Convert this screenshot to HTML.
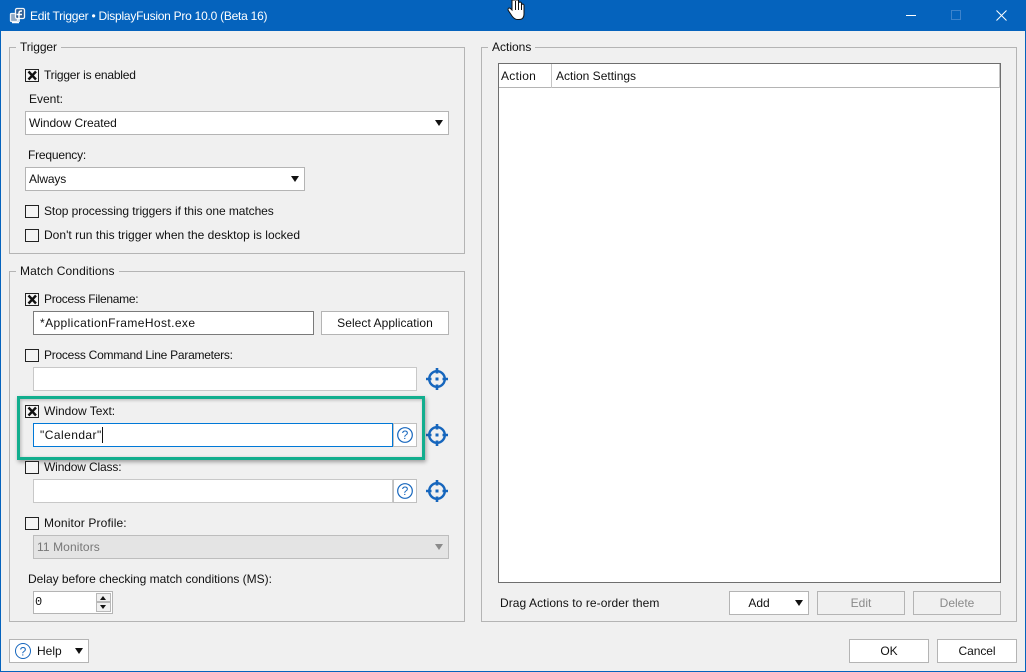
<!DOCTYPE html>
<html><head><meta charset="utf-8"><style>
*{box-sizing:border-box}
html,body{margin:0;padding:0}
body{width:1026px;height:672px;position:relative;overflow:hidden;background:#f0f0f0;font:12px "Liberation Sans",sans-serif;color:#111}
.a{position:absolute}
.t{position:absolute;white-space:nowrap;line-height:16px;height:16px}
.g{position:absolute;border:1px solid #b4b4b4}
.lg{position:absolute;background:#f0f0f0;padding:0 4px;line-height:16px;white-space:nowrap}
.cb{position:absolute;width:14px;height:13px;border:1px solid #222;background:#f4f4f4}
.i{position:absolute;background:#fff;border:1px solid #c8c8c8}
.b{position:absolute;background:#fff;border:1px solid #b4b4b4;text-align:center;line-height:22px;white-space:nowrap}
.d{color:#8a8a8a;background:#f0f0f0}
.s{position:absolute;background:#fff;border:1px solid #b4b4b4;line-height:22px;padding-left:3px;white-space:nowrap}
.ar{position:absolute;width:0;height:0;border-left:4.5px solid transparent;border-right:4.5px solid transparent;border-top:6px solid #111}
</style></head><body>
<div class="a" style="left:0;top:0;width:1026px;height:31px;background:#0563bd"></div>
<div class="a" style="left:0;top:31px;width:1px;height:641px;background:#0563bd"></div>
<div class="a" style="left:1025px;top:31px;width:1px;height:641px;background:#0563bd"></div>
<div class="a" style="left:0;top:671px;width:1026px;height:1px;background:#0563bd"></div>
<svg class="a" style="left:9px;top:7px" width="17" height="17" viewBox="0 0 17 17"><rect x="1.500" y="6.500" width="7" height="8" rx="1" fill="#8fa8c4" stroke="#e8eef4" stroke-width="1.300"/><rect x="6.500" y="1.500" width="9" height="10" rx="1.500" fill="#2f5f96" stroke="#f4f6f8" stroke-width="1.300"/><path d="M10 15V6Q10 3.800 13 4M7.500 7.500H13M3 15.500H10" stroke="#fff" stroke-width="1.500" fill="none"/></svg>
<div class="t" style="left:30px;top:8px;color:#fff;letter-spacing:-.25px">Edit Trigger • DisplayFusion Pro 10.0 (Beta 16)</div>
<div class="a" style="left:906px;top:15px;width:10px;height:1px;background:#fff"></div>
<div class="a" style="left:951px;top:10px;width:10px;height:10px;border:1px solid #3d83cc"></div>
<svg class="a" style="left:996px;top:10px" width="11" height="11"><path d="M.5.500L10.500 10.500M10.500.500L.5 10.500" stroke="#fff" fill="none"/></svg>
<svg class="a" style="left:506px;top:0" width="20" height="21" viewBox="0 0 20 21"><path d="M6 0V10L4.500 8.500Q2 7 2 10L6 16Q8.500 19.500 11.500 19.500H13Q18 19.500 18 14V5Q17 3 15.500 5V3Q14 1 12.500 3V0Z" fill="#fff" stroke="#111"/><path d="M9.500 1V10M12.500 2V10M15.500 4V10" stroke="#111" fill="none"/></svg>

<div class="g" style="left:9px;top:47px;width:456px;height:207px"></div>
<div class="lg" style="left:16px;top:39px;letter-spacing:-.1px">Trigger</div>
<div class="cb" style="left:25px;top:69px"></div>
<svg class="a" style="left:27px;top:70px" width="11" height="11"><path d="M1.500 1.500L9 9.500M9 1.500L1.500 9.500" stroke="#111" stroke-width="2.400" fill="none"/></svg>
<div class="t" style="left:44px;top:67px;letter-spacing:-.22px">Trigger is enabled</div>
<div class="t" style="left:29px;top:91px">Event:</div>
<div class="s" style="left:25px;top:111px;width:424px;height:24px;letter-spacing:-.07px">Window Created</div>
<div class="ar" style="left:435px;top:120px"></div>
<div class="t" style="left:28px;top:147px;letter-spacing:-.2px">Frequency:</div>
<div class="s" style="left:25px;top:167px;width:280px;height:24px;letter-spacing:-.15px">Always</div>
<div class="ar" style="left:291px;top:176px"></div>
<div class="cb" style="left:25px;top:205px"></div>
<div class="t" style="left:44px;top:203px;letter-spacing:-.07px">Stop processing triggers if this one matches</div>
<div class="cb" style="left:25px;top:229px"></div>
<div class="t" style="left:44px;top:227px;letter-spacing:.02px">Don't run this trigger when the desktop is locked</div>

<div class="g" style="left:9px;top:271px;width:456px;height:351px"></div>
<div class="lg" style="left:16px;top:263px;letter-spacing:.12px">Match Conditions</div>
<div class="cb" style="left:25px;top:293px"></div>
<svg class="a" style="left:27px;top:294px" width="11" height="11"><path d="M1.500 1.500L9 9.500M9 1.500L1.500 9.500" stroke="#111" stroke-width="2.400" fill="none"/></svg>
<div class="t" style="left:44px;top:291px;letter-spacing:-.3px">Process Filename:</div>
<div class="i" style="left:33px;top:311px;width:281px;height:24px;border-color:#7a7a7a;padding-left:6px;line-height:22px;letter-spacing:.4px">*ApplicationFrameHost.exe</div>
<div class="b" style="left:321px;top:311px;width:128px;height:24px;letter-spacing:.05px">Select Application</div>
<div class="cb" style="left:25px;top:349px"></div>
<div class="t" style="left:44px;top:347px;letter-spacing:-.25px">Process Command Line Parameters:</div>
<div class="i" style="left:33px;top:367px;width:384px;height:24px"></div>
<svg class="a" style="left:425px;top:367px" width="24" height="24" viewBox="0 0 24 24"><circle cx="12" cy="12" r="7.800" fill="none" stroke="#1666bd" stroke-width="2.400"/><path d="M12 1V6.500M12 17.500V23M1 12H6.500M17.500 12H23" stroke="#1666bd" stroke-width="2.600"/><rect x="10.500" y="10.500" width="3" height="3" fill="#1666bd"/></svg>

<div class="cb" style="left:25px;top:405px"></div>
<svg class="a" style="left:27px;top:406px" width="11" height="11"><path d="M1.500 1.500L9 9.500M9 1.500L1.500 9.500" stroke="#111" stroke-width="2.400" fill="none"/></svg>
<div class="t" style="left:44px;top:403px">Window Text:</div>
<div class="i" style="left:33px;top:423px;width:360px;height:24px;border-color:#0078d7;padding-left:6px;line-height:22px;letter-spacing:.45px">"Calendar"</div>
<div class="a" style="left:102px;top:427px;width:1px;height:16px;background:#111"></div>
<div class="i" style="left:393px;top:423px;width:24px;height:24px;border-color:#c0c0c0"></div>
<svg class="a" style="left:397px;top:427px" width="16" height="16" viewBox="0 0 16 16"><circle cx="8" cy="8" r="7.300" fill="#fff" stroke="#1666bd" stroke-width="1.200"/><text x="8" y="12.200" text-anchor="middle" font-family="Liberation Sans" font-size="12" fill="#1666bd">?</text></svg>
<svg class="a" style="left:425px;top:423px" width="24" height="24" viewBox="0 0 24 24"><circle cx="12" cy="12" r="7.800" fill="none" stroke="#1666bd" stroke-width="2.400"/><path d="M12 1V6.500M12 17.500V23M1 12H6.500M17.500 12H23" stroke="#1666bd" stroke-width="2.600"/><rect x="10.500" y="10.500" width="3" height="3" fill="#1666bd"/></svg>
<div class="a" style="left:17px;top:396px;width:408px;height:64px;border:3px solid #12ae8e;box-shadow:1px 2px 4px rgba(0,0,0,.35),inset 1px 1px 3px rgba(0,0,0,.25)"></div>

<div class="cb" style="left:25px;top:461px"></div>
<div class="t" style="left:44px;top:459px;letter-spacing:-.15px">Window Class:</div>
<div class="i" style="left:33px;top:479px;width:360px;height:24px"></div>
<div class="i" style="left:393px;top:479px;width:24px;height:24px;border-color:#c0c0c0"></div>
<svg class="a" style="left:397px;top:483px" width="16" height="16" viewBox="0 0 16 16"><circle cx="8" cy="8" r="7.300" fill="#fff" stroke="#1666bd" stroke-width="1.200"/><text x="8" y="12.200" text-anchor="middle" font-family="Liberation Sans" font-size="12" fill="#1666bd">?</text></svg>
<svg class="a" style="left:425px;top:479px" width="24" height="24" viewBox="0 0 24 24"><circle cx="12" cy="12" r="7.800" fill="none" stroke="#1666bd" stroke-width="2.400"/><path d="M12 1V6.500M12 17.500V23M1 12H6.500M17.500 12H23" stroke="#1666bd" stroke-width="2.600"/><rect x="10.500" y="10.500" width="3" height="3" fill="#1666bd"/></svg>

<div class="cb" style="left:25px;top:517px"></div>
<div class="t" style="left:44px;top:515px;letter-spacing:.13px">Monitor Profile:</div>
<div class="s" style="left:33px;top:535px;width:416px;height:24px;background:#e4e4e4;color:#777;border-color:#bdbdbd;letter-spacing:.1px">11 Monitors</div>
<div class="ar" style="left:435px;top:544px;border-top-color:#8a8a8a"></div>
<div class="t" style="left:28px;top:571px;letter-spacing:-.02px">Delay before checking match conditions (MS):</div>
<div class="i" style="left:33px;top:591px;width:80px;height:23px;border-color:#b4b4b4;font:12px/20px 'Liberation Mono',monospace;padding-left:1px">0</div>
<div class="a" style="left:96px;top:593px;width:15px;height:9px;background:#f0f0f0;border:1px solid #b8b8b8"></div>
<div class="a" style="left:96px;top:602px;width:15px;height:10px;background:#f0f0f0;border:1px solid #b8b8b8"></div>
<div class="ar" style="left:100px;top:596px;border-left-width:3.500px;border-right-width:3.500px;border-top:0;border-bottom:4px solid #111"></div>
<div class="ar" style="left:100px;top:605px;border-left-width:3.500px;border-right-width:3.500px;border-top-width:4px"></div>

<div class="g" style="left:481px;top:47px;width:536px;height:575px"></div>
<div class="lg" style="left:488px;top:39px">Actions</div>
<div class="a" style="left:498px;top:63px;width:503px;height:520px;background:#fff;border:1px solid #6e6e6e"></div>
<div class="a" style="left:499px;top:87px;width:501px;height:1px;background:#b4b4b4"></div>
<div class="a" style="left:551px;top:64px;width:1px;height:24px;background:#c4c4c4"></div>
<div class="a" style="left:999px;top:64px;width:1px;height:24px;background:#c4c4c4"></div>
<div class="t" style="left:501px;top:68px;letter-spacing:.3px">Action</div>
<div class="t" style="left:556px;top:68px">Action Settings</div>
<div class="t" style="left:500px;top:595px;letter-spacing:.07px">Drag Actions to re-order them</div>
<div class="b" style="left:729px;top:591px;width:80px;height:24px;padding-right:20px">Add</div>
<div class="ar" style="left:795px;top:600px"></div>
<div class="b d" style="left:817px;top:591px;width:88px;height:24px">Edit</div>
<div class="b d" style="left:913px;top:591px;width:88px;height:24px">Delete</div>

<div class="b" style="left:9px;top:639px;width:80px;height:24px;text-align:left;padding-left:27px">Help</div>
<svg class="a" style="left:14px;top:642px" width="18" height="18" viewBox="0 0 18 18"><circle cx="9" cy="9" r="7.500" fill="#fff" stroke="#1666bd"/><text x="9" y="13.500" text-anchor="middle" font-family="Liberation Sans" font-size="12" fill="#1666bd">?</text></svg>
<div class="ar" style="left:75px;top:648px"></div>
<div class="b" style="left:849px;top:639px;width:80px;height:24px">OK</div>
<div class="b" style="left:937px;top:639px;width:80px;height:24px;letter-spacing:-.05px">Cancel</div>
</body></html>
